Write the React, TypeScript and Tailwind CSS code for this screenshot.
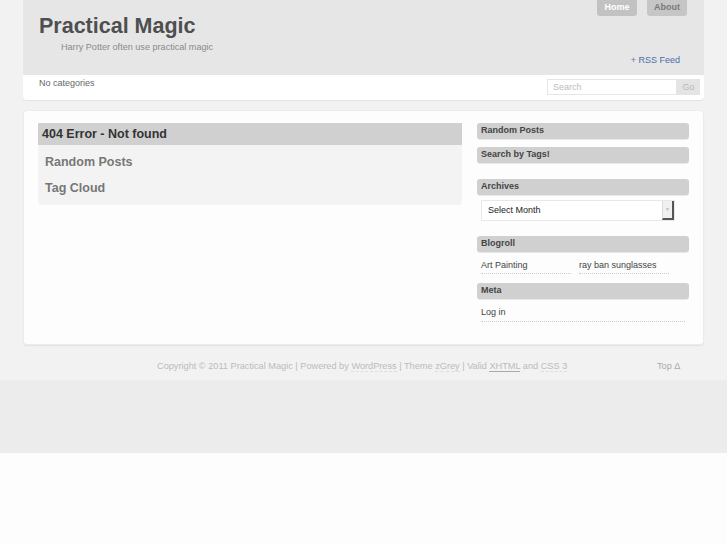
import React from "react";

const font = { fontFamily: '"Liberation Sans", Arial, sans-serif' };

function WidgetTitle({ children }: { children: React.ReactNode }) {
  return (
    <div className="h-[16px] rounded-[3px] bg-[#d0d0d0] px-[4px] text-[9px] font-bold leading-[15px] text-[#444] shadow-[0_1px_0_#e8e8e8]">
      {children}
    </div>
  );
}

export default function App() {
  return (
    <div className="min-h-[545px] bg-[#fdfdfd]" style={font}>
      <div className="bg-[#f2f2f2] h-[380px] flex flex-col">
        <div className="mx-auto w-[681px]">
          {/* header */}
          <div className="relative h-[75px] bg-[#e6e6e6]">
            <div className="absolute right-[17px] top-0 flex gap-[10px]">
              <div className="w-[40px] h-[16px] rounded-b-[3px] bg-[#c2c2c2] text-white text-[9px] font-bold leading-[15px] text-center">Home</div>
              <div className="w-[40px] h-[16px] rounded-b-[3px] bg-[#c6c6c6] text-[#7a7a7a] text-[9px] font-bold leading-[15px] text-center">About</div>
            </div>
            <div className="pl-[16px] pt-[12px] text-[21.5px] font-bold text-[#4f4f4f] leading-[28px]">Practical Magic</div>
            <div className="pl-[38px] pt-[1px] text-[9.1px] text-[#8a8a8a] leading-[12px]">Harry Potter often use practical magic</div>
            <div className="absolute right-[24px] top-[54px] text-[9px] leading-[12px] text-[#4a6ea8]">
              <span className="text-[#8a6a9a]">+</span> RSS Feed
            </div>
          </div>
          {/* subbar */}
          <div className="h-[25px] bg-white rounded-b-[4px] shadow-[0_1px_1px_#e4e4e4] flex items-start justify-between pl-[16px] pr-[4px]">
            <div className="pt-[2px] text-[9px] text-[#666] leading-[12px]">No categories</div>
            <div className="mt-[4px] flex">
              <div className="w-[130px] h-[16px] border border-[#e6e6e6] bg-white text-[9px] text-[#bbb] leading-[14px] pl-[5px]">Search</div>
              <div className="w-[23px] h-[16px] bg-[#e4e4e4] text-[9px] text-[#b8b8b8] leading-[16px] text-center">Go</div>
            </div>
          </div>
          {/* main */}
          <div className="mt-[10px] h-[235px] bg-[#fdfdfd] rounded-[4px] border border-[#ececec] shadow-[0_1px_1px_#e2e2e2] flex gap-[15px] pl-[14px] pr-[14px] pt-[12px]">
            <div className="w-[424px]">
              <div className="bg-[#f3f3f3] rounded-[4px] pb-[4px]">
                <div className="h-[22px] bg-[#d0d0d0] px-[4px] text-[12.5px] font-bold text-[#333] leading-[22px]">404 Error - Not found</div>
                <div className="pl-[7px] pt-[4px] text-[12.5px] font-bold text-[#777] leading-[26px]">
                  <div>Random Posts</div>
                  <div>Tag Cloud</div>
                </div>
              </div>
            </div>
            <div className="w-[212px] flex flex-col">
              <WidgetTitle>Random Posts</WidgetTitle>
              <div className="h-[8px]" />
              <WidgetTitle>Search by Tags!</WidgetTitle>
              <div className="h-[16px]" />
              <WidgetTitle>Archives</WidgetTitle>
              <div className="mt-[5px] ml-[4px] w-[194px] h-[21px] border border-[#e8e8e8] bg-white flex items-center justify-between">
                <span className="pl-[6px] text-[9px] text-[#222]">Select Month</span>
                <div className="w-[12px] h-[19px] bg-[#f0f0f0] border-r-2 border-b-2 border-[#555] border-l border-l-[#ddd] flex items-center justify-center">
                  <span className="text-[5px] text-[#bbb]">▼</span>
                </div>
              </div>
              <div className="h-[15px]" />
              <WidgetTitle>Blogroll</WidgetTitle>
              <div className="flex gap-[8px] pl-[4px] pt-[7px] text-[9px] text-[#444] leading-[12px]">
                <div className="w-[90px] border-b border-dotted border-[#ccc] pb-[2px]">Art Painting</div>
                <div className="w-[90px] border-b border-dotted border-[#ccc] pb-[2px]">ray ban sunglasses</div>
              </div>
              <div className="h-[9px]" />
              <WidgetTitle>Meta</WidgetTitle>
              <div className="ml-[4px] mr-[4px] pt-[7px] pb-[3px] text-[9px] text-[#444] leading-[12px] border-b border-dotted border-[#ccc]">Log in</div>
            </div>
          </div>
          {/* footer */}
          <div className="relative h-[35px] text-[9.2px] text-[#bbb] leading-[12px]">
            <div className="absolute left-[134px] top-[15px] whitespace-nowrap">
              Copyright © 2011 Practical Magic | Powered by{" "}
              <span className="border-b border-dashed border-[#ddd]">WordPress</span> | Theme{" "}
              <span className="border-b border-dashed border-[#ddd]">zGrey</span> | Valid{" "}
              <span className="border-b border-[#aaa]">XHTML</span> and{" "}
              <span className="border-b border-dashed border-[#ddd]">CSS 3</span>
            </div>
            <div className="absolute left-[634px] top-[15px] text-[#aaa]">Top Δ</div>
          </div>
        </div>
      </div>
      <div className="h-[73px] bg-[#ececec]" />
    </div>
  );
}
